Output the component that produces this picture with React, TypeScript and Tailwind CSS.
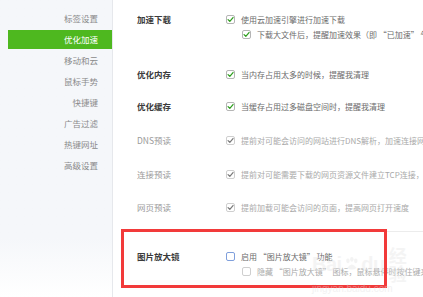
import React from 'react';

const font = { fontFamily: '"Microsoft YaHei", "Noto Sans CJK SC", sans-serif' };

const navItems = ['标签设置', '优化加速', '移动和云', '鼠标手势', '快捷键', '广告过滤', '热键网址', '高级设置'];

function Box({ checked = true, disabled = false, focus = false }: { checked?: boolean; disabled?: boolean; focus?: boolean }) {
  const border = focus ? 'border-[#7f9fdc]' : disabled ? 'border-[#cfcfcf]' : 'border-[#b5b5b5]';
  return (
    <span className={`flex h-[9px] w-[9px] shrink-0 items-center justify-center rounded-[2px] border bg-white ${border}`}>
      {checked && (
        <svg width="7" height="7" viewBox="0 0 10 10">
          <path
            d="M1.5 5.2 L4 7.6 L8.6 2.2"
            fill="none"
            stroke={disabled ? '#7a7a7a' : '#2e9e1e'}
            strokeWidth="1.8"
            strokeLinecap="round"
            strokeLinejoin="round"
          />
        </svg>
      )}
    </span>
  );
}

function Opt({ text, checked, disabled, focus }: { text: string; checked?: boolean; disabled?: boolean; focus?: boolean }) {
  return (
    <div className="flex items-center gap-[6px] whitespace-nowrap">
      <Box checked={checked} disabled={disabled} focus={focus} />
      <span className={`text-[8px] ${disabled ? 'text-[#a9a9a9]' : 'text-[#6b6b6b]'}`}>{text}</span>
    </div>
  );
}

function Row({ label, dim, className = '', children }: { label: string; dim?: boolean; className?: string; children: React.ReactNode }) {
  return (
    <div className={`flex items-start ${className}`}>
      <div className={`w-[89px] shrink-0 text-[8.5px] leading-[11px] ${dim ? 'text-[#9a9a9a]' : 'font-bold text-[#3a3a3a]'}`}>
        {label}
      </div>
      <div className="flex flex-col gap-[4px] leading-[11px]">{children}</div>
    </div>
  );
}

export default function App() {
  return (
    <div className="relative flex h-[297px] w-[423px] overflow-hidden bg-white" style={font}>
      <div className="flex w-[113px] shrink-0 flex-col border-r border-[#e6e8ec] bg-gradient-to-b from-[#f5f7fa] from-80% to-white pt-[8px]">
        {navItems.map((item, i) => (
          <div
            key={item}
            className={`ml-[8px] flex items-center justify-end pr-[14px] text-[8.5px] ${
              i === 1 ? 'my-[1px] h-[19px] bg-[#4eb81f] text-white' : 'h-[21px] text-[#8a8a8a]'
            }`}
          >
            {item}
          </div>
        ))}
      </div>

      <div className="flex flex-1 flex-col overflow-hidden pl-[24px] pt-[14px]">
        <Row label="加速下载">
          <Opt text="使用云加速引擎进行加速下载" />
          <div className="pl-[16px]">
            <Opt text="下载大文件后，提醒加速效果（即 “已加速” 气泡）" />
          </div>
        </Row>
        <Row label="优化内存" className="mt-[29px]">
          <Opt text="当内存占用太多的时候，提醒我清理" />
        </Row>
        <Row label="优化缓存" className="mt-[21px]">
          <Opt text="当缓存占用过多磁盘空间时，提醒我清理" />
        </Row>
        <Row label="DNS预读" dim className="mt-[23px]">
          <Opt text="提前对可能会访问的网站进行DNS解析，加速连接网站" disabled />
        </Row>
        <Row label="连接预读" dim className="mt-[23px]">
          <Opt text="提前对可能需要下载的网页资源文件建立TCP连接，缩短等待时间" disabled />
        </Row>
        <Row label="网页预读" dim className="mt-[22px]">
          <Opt text="提前加载可能会访问的页面，提高网页打开速度" disabled />
        </Row>
        <div className="mt-[18px] border-t border-[#ececec] pt-[19px]">
          <Row label="图片放大镜">
            <Opt text="启用 “图片放大镜” 功能" checked={false} focus />
            <div className="pl-[16px]">
              <Opt text="隐藏 “图片放大镜” 图标，鼠标悬停时按住键来显示图片" checked={false} disabled />
            </div>
          </Row>
        </div>
      </div>

      <div className="pointer-events-none absolute left-[121px] top-[229px] h-[59px] w-[266px] border-[3px] border-[#f23a3a]" />

      <div className="pointer-events-none absolute left-[312px] top-[246px] flex flex-col items-start opacity-40">
        <div className="flex items-center gap-[2px] text-[20px] font-bold leading-none tracking-tight text-[#e6e6e6]" style={{ fontFamily: '"Liberation Sans", sans-serif' }}>
          <span>Bai</span>
          <svg width="16" height="16" viewBox="0 0 20 20">
            <ellipse cx="5" cy="6" rx="2.2" ry="3" fill="#e2e2e2" />
            <ellipse cx="10" cy="4" rx="2.2" ry="3" fill="#e2e2e2" />
            <ellipse cx="15" cy="6" rx="2.2" ry="3" fill="#e2e2e2" />
            <path d="M4 15 Q10 6 16 15 Q10 19 4 15 Z" fill="#e2e2e2" />
          </svg>
          <span>du</span>
          <span className="ml-[2px] text-[18px]" style={font}>经验</span>
        </div>
        <div className="mt-[2px] text-[10px] leading-none text-[#e0e0e0]" style={{ fontFamily: '"Liberation Sans", sans-serif' }}>
          jingyan.baidu.com
        </div>
      </div>
    </div>
  );
}
